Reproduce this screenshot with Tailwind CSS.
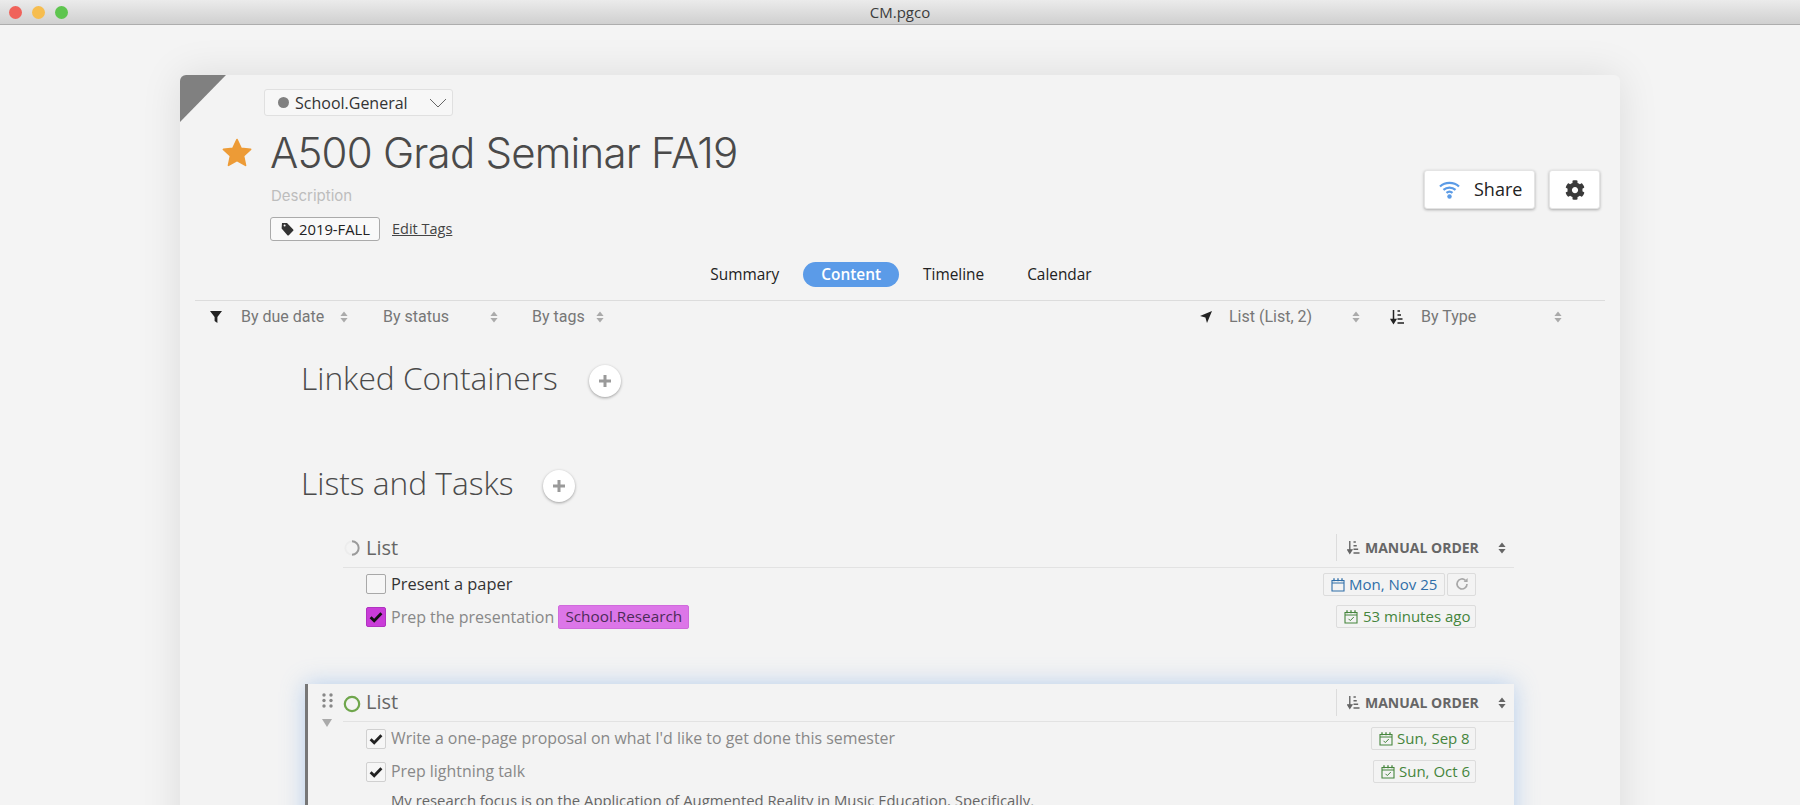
<!DOCTYPE html>
<html lang="en">
<head>
  <meta charset="UTF-8" />
  <title>CM.pgco</title>
  <script src="https://cdn.jsdelivr.net/npm/@tailwindcss/browser@4"></script>
</head>
<body class="bg-[#f4f4f4] h-[805px] overflow-hidden font-['Open_Sans',sans-serif] text-[#444]">
  <!-- shared icons -->
  <svg class="hidden">
    <symbol id="updown" viewBox="0 0 8 12"><path d="M4 0.5 7.6 5H0.4zM4 11.5 0.4 7H7.6z" fill="currentColor"/></symbol>
    <symbol id="sort" viewBox="0 0 14 16"><path d="M3 1v12M0.8 10.5 3 14l2.2-3.5z" stroke="currentColor" stroke-width="1.5" fill="currentColor"/><path d="M7 2h2.5M7 6h3.5M7 10h5M7 14h6.5" stroke="currentColor" stroke-width="1.6"/></symbol>
    <symbol id="cal" viewBox="0 0 14 15"><path d="M1 3.5h12v10.5H1zM1 6h12" fill="none" stroke="currentColor" stroke-width="1.1"/><path d="M3 1.2v3M7 1.2v3M11 1.2v3" stroke="currentColor" stroke-width="1.3"/></symbol>
    <symbol id="calcheck" viewBox="0 0 14 15"><path d="M1 3.5h12v10.5H1zM1 6h12" fill="none" stroke="currentColor" stroke-width="1.1"/><path d="M3 1.2v3M7 1.2v3M11 1.2v3" stroke="currentColor" stroke-width="1.3"/><path d="M4.5 9.8 6.3 11.6 9.8 8" fill="none" stroke="currentColor" stroke-width="1"/></symbol>
    <symbol id="check" viewBox="0 0 14 12"><path d="M1.6 6.2 5.2 9.8 12.4 2.2" fill="none" stroke="currentColor" stroke-width="2.8"/></symbol>
  </svg>

  <!-- Title bar -->
  <header class="relative h-[25px] flex items-center justify-center bg-gradient-to-b from-[#ebebeb] to-[#d0d0d0] border-b border-[#adadad] text-[15px] text-[#3c3c3c]">
    <div class="absolute left-[9px] top-[6px] flex gap-[10px]">
      <span class="w-[13px] h-[13px] rounded-full bg-[#f0625a]"></span>
      <span class="w-[13px] h-[13px] rounded-full bg-[#f6bd4f]"></span>
      <span class="w-[13px] h-[13px] rounded-full bg-[#5ec54f]"></span>
    </div>
    CM.pgco
  </header>

  <div class="px-[180px] pt-[50px]">
    <main class="relative bg-[#f3f3f3] rounded-md h-[800px] shadow-[0_0_40px_rgba(0,0,0,0.1)]">
      <!-- Corner flag -->
      <svg class="absolute left-0 top-0" width="46" height="47"><path d="M0 47V6a6 6 0 0 1 6-6H46z" fill="#808080"/></svg>

      <!-- Header -->
      <section class="flex justify-between h-[187px]">
        <div class="pl-[40px] pt-[14px]">
          <div class="ml-[44px] w-[189px] h-[27px] flex items-center bg-[#f7f7f7] border border-[#e0e0e0] rounded-[3px] pl-[13px] text-[16px] text-[#333]">
            <span class="w-[11px] h-[11px] rounded-full bg-[#808080] mr-[6px]"></span>
            <span>School.General</span>
            <svg class="ml-[21px]" width="18" height="10" viewBox="0 0 18 10"><path d="M1 1l8 8 8-8" fill="none" stroke="#666" stroke-width="1"/></svg>
          </div>
          <div class="flex items-center mt-[11px] h-[50px]">
            <svg class="mt-[2px]" width="34" height="34" viewBox="0 0 24 24"><path d="M12 2.5l2.9 6.2 6.7.8-5 4.6 1.4 6.6-6-3.4-6 3.4 1.4-6.6-5-4.6 6.7-.8z" fill="#ed9b36" stroke="#ed9b36" stroke-width="1.2" stroke-linejoin="round"/></svg>
            <h1 class="ml-[16px] font-['Inter',sans-serif] font-light text-[42px] tracking-[-0.8px] text-[#4a4a4a] whitespace-nowrap">A500 Grad Seminar FA19</h1>
          </div>
          <div class="ml-[51px] mt-[8px] font-['Inter',sans-serif] text-[15px] text-[#bdbdbd] leading-[22px]">Description</div>
          <div class="ml-[50px] mt-[10px] flex items-center">
            <span class="h-[24px] w-[110px] flex items-center bg-[#f9f9f9] border border-[#aaa] rounded-[3px] pl-[10px] text-[14.8px] text-[#222]">
              <svg class="mr-[5px]" width="13" height="14" viewBox="0 0 13 14"><path d="M1 1h5l6.2 6.4a1 1 0 0 1 0 1.4l-4.4 4.4a1 1 0 0 1-1.4 0L.6 6.6z" fill="#333"/><circle cx="3.6" cy="3.6" r="1" fill="#f9f9f9"/></svg>
              2019-FALL
            </span>
            <a class="ml-[12px] -mt-[1px] text-[14.5px] text-[#444] underline">Edit Tags</a>
          </div>
        </div>
        <div class="flex gap-[14px] pt-[95px] pr-[20px]">
          <button class="w-[111px] h-[39px] flex items-center bg-white rounded-[3px] border border-[#e4e4e4] shadow-[0_1px_3px_rgba(0,0,0,0.3)] pl-[13px] text-[18px] text-[#222]">
            <svg class="mr-[13px]" width="23" height="19" viewBox="0 0 24 22"><path d="M1 7.5C7 2 17 2 23 7.5M5 11.5c4-3.5 10-3.5 14 0M8.5 15c2-1.7 5-1.7 7 0" fill="none" stroke="#5b9be6" stroke-width="2.6"/><circle cx="12" cy="19" r="2.6" fill="#5b9be6"/></svg>
            Share
          </button>
          <button class="w-[51px] h-[39px] flex items-center justify-center bg-white rounded-[3px] border border-[#e4e4e4] shadow-[0_1px_3px_rgba(0,0,0,0.3)]">
            <svg width="20" height="20" viewBox="0 0 512 512"><path fill="#3a3a3a" d="M487.4 315.7l-42.6-24.6c4.3-23.2 4.3-47 0-70.2l42.6-24.6c4.9-2.8 7.1-8.6 5.5-14-11.1-35.6-30-67.8-54.7-94.6-3.8-4.1-10-5.1-14.8-2.3L380.8 110c-17.9-15.4-38.5-27.3-60.8-35.1V25.8c0-5.6-3.9-10.5-9.4-11.7-36.7-8.2-74.3-7.8-109.2 0-5.5 1.2-9.4 6.1-9.4 11.7V75c-22.2 7.9-42.8 19.8-60.8 35.1L88.7 85.5c-4.9-2.8-11-1.9-14.8 2.3-24.7 26.7-43.6 58.9-54.7 94.6-1.7 5.4.6 11.2 5.5 14L67.3 221c-4.3 23.2-4.3 47 0 70.2l-42.6 24.6c-4.9 2.8-7.1 8.6-5.5 14 11.1 35.6 30 67.8 54.7 94.6 3.8 4.1 10 5.1 14.8 2.3l42.6-24.6c17.9 15.4 38.5 27.3 60.8 35.1v49.2c0 5.6 3.9 10.5 9.4 11.7 36.7 8.2 74.3 7.8 109.2 0 5.5-1.2 9.4-6.1 9.4-11.7v-49.2c22.2-7.9 42.8-19.8 60.8-35.1l42.6 24.6c4.9 2.8 11 1.9 14.8-2.3 24.7-26.7 43.6-58.9 54.7-94.6 1.5-5.5-.7-11.3-5.6-14.1zM256 336c-44.1 0-80-35.9-80-80s35.9-80 80-80 80 35.9 80 80-35.9 80-80 80z"/></svg>
          </button>
        </div>
      </section>

      <!-- Tabs -->
      <nav class="flex justify-center gap-[5px] pl-[2px] text-[15.4px] font-medium text-[#222] h-[25px] items-center">
        <a class="px-[19px] leading-[25px]">Summary</a>
        <a class="px-[18px] leading-[25px] rounded-full bg-[#5b9be8] text-white font-semibold">Content</a>
        <a class="px-[19px] leading-[25px]">Timeline</a>
        <a class="px-[19px] leading-[25px]">Calendar</a>
      </nav>

      <!-- Filters -->
      <div class="mx-[15px] mt-[13px] border-t border-[#dcdcdc] h-[31px] pt-[2px] flex items-center justify-between pl-[15px] pr-[43px] font-['Roboto',sans-serif] text-[16px] text-[#777]">
        <div class="flex items-center">
          <svg class="mr-[19px] text-[#222]" width="12" height="12" viewBox="0 0 12 12"><path d="M0 0h12L7.4 6v6L4.6 10V6z" fill="currentColor"/></svg>
          <div class="w-[107px] flex items-center justify-between"><span>By due date</span><svg class="text-[#aaa]" width="8" height="12"><use href="#updown"/></svg></div>
          <div class="ml-[35px] w-[115px] flex items-center justify-between"><span>By status</span><svg class="text-[#aaa]" width="8" height="12"><use href="#updown"/></svg></div>
          <div class="ml-[34px] w-[72px] flex items-center justify-between"><span>By tags</span><svg class="text-[#aaa]" width="8" height="12"><use href="#updown"/></svg></div>
        </div>
        <div class="flex items-center">
          <svg class="mr-[17px] text-[#222]" width="12" height="12" viewBox="0 0 12 12"><path d="M12 0 7 12 5.4 6.6 0 5z" fill="currentColor"/></svg>
          <div class="w-[131px] flex items-center justify-between"><span>List (List, 2)</span><svg class="text-[#aaa]" width="8" height="12"><use href="#updown"/></svg></div>
          <svg class="ml-[30px] mr-[16px] text-[#222]" width="15" height="16"><use href="#sort"/></svg>
          <div class="w-[141px] flex items-center justify-between"><span>By Type</span><svg class="text-[#aaa]" width="8" height="12"><use href="#updown"/></svg></div>
        </div>
      </div>

      <!-- Linked Containers -->
      <div class="ml-[121px] mt-[27px] h-[40px] flex items-center text-[31.7px] font-light text-[#4a4a4a]">
        <h2>Linked Containers</h2>
        <button class="ml-[31px] mt-[6px] w-[32px] h-[32px] rounded-full bg-white shadow-[0_1px_3px_rgba(0,0,0,0.35)] flex items-center justify-center">
          <svg width="14" height="14"><path d="M7 1v12M1 7h12" stroke="#9a9a9a" stroke-width="3"/></svg>
        </button>
      </div>

      <!-- Lists and Tasks -->
      <div class="ml-[121px] mt-[65px] h-[40px] flex items-center text-[31.7px] font-light text-[#4a4a4a]">
        <h2>Lists and Tasks</h2>
        <button class="ml-[29px] mt-[6px] w-[32px] h-[32px] rounded-full bg-white shadow-[0_1px_3px_rgba(0,0,0,0.35)] flex items-center justify-center">
          <svg width="14" height="14"><path d="M7 1v12M1 7h12" stroke="#9a9a9a" stroke-width="3"/></svg>
        </button>
      </div>

      <!-- List 1 -->
      <div class="ml-[163px] w-[1171px] mt-[25px]">
        <div class="h-[40px] border-b border-[#e2e2e2] flex items-center text-[#666]">
          <svg class="ml-[1px]" width="16" height="18" viewBox="0 0 18 18"><circle cx="9" cy="9" r="7.5" fill="none" stroke="#ececec" stroke-width="2"/><path d="M9 1.5a7.5 7.5 0 0 1 0 15" fill="none" stroke="#9a9a9a" stroke-width="2.2"/></svg>
          <span class="ml-[6px] text-[20px] font-medium">List</span>
          <div class="ml-auto h-[27px] w-[178px] border-l border-[#dcdcdc] flex items-center pl-[10px]">
            <svg class="text-[#666]" width="13" height="15"><use href="#sort"/></svg>
            <span class="ml-[5px] text-[14px] font-bold">MANUAL ORDER</span>
            <svg class="ml-auto mr-[8px] text-[#666]" width="8" height="12"><use href="#updown"/></svg>
          </div>
        </div>
        <div class="h-[32px] flex items-center pl-[23px] pr-[38px]">
          <span class="w-[20px] h-[20px] bg-[#f6f6f6] border border-[#a8a8a8] rounded-[2px]"></span>
          <span class="ml-[5px] text-[16.4px] font-medium text-[#333]">Present a paper</span>
          <span class="ml-auto h-[23px] w-[122px] flex items-center border border-[#dcdcdc] rounded-[2px] pl-[7px] text-[15px] text-[#2f6ea8]">
            <svg class="mr-[4px]" width="14" height="15"><use href="#cal"/></svg>Mon, Nov 25
          </span>
          <span class="ml-[2px] h-[23px] w-[29px] flex items-center justify-center border border-[#dcdcdc] rounded-[2px]">
            <svg width="14" height="14" viewBox="0 0 14 14"><path d="M12 7a5 5 0 1 1-1.6-3.7" fill="none" stroke="#a8a8a8" stroke-width="1.7"/><path d="M12.6 1v4h-4z" fill="#a8a8a8"/></svg>
          </span>
        </div>
        <div class="h-[33px] flex items-center pl-[23px] pr-[38px]">
          <span class="w-[20px] h-[20px] bg-[#c93cd8] rounded-[2px] border border-[#b033c0] flex items-center justify-center text-[#111]"><svg width="14" height="12"><use href="#check"/></svg></span>
          <span class="ml-[5px] text-[16px] text-[#888]">Prep the presentation</span>
          <span class="ml-[4px] h-[24px] w-[131px] flex items-center justify-center bg-[#dc76e8] border border-[#d06adc] rounded-[2px] text-[15.3px] text-[#4d2c58]">School.Research</span>
          <span class="ml-auto h-[23px] w-[140px] flex items-center border border-[#dcdcdc] rounded-[2px] pl-[7px] text-[15px] text-[#45853c]">
            <svg class="mr-[5px]" width="14" height="15"><use href="#calcheck"/></svg>53 minutes ago
          </span>
        </div>
      </div>

      <!-- List 2 (hovered) -->
      <div class="relative ml-[125px] w-[1209px] mt-[51px] h-[200px] border-l-[3px] border-[#777] bg-[#f3f3f3] shadow-[0_0_22px_rgba(110,165,230,0.45)] pl-[35px]">
        <svg class="absolute left-[14px] top-[9px]" width="11" height="15" viewBox="0 0 11 15"><g fill="#888"><circle cx="2" cy="2" r="1.7"/><circle cx="9" cy="2" r="1.7"/><circle cx="2" cy="7.5" r="1.7"/><circle cx="9" cy="7.5" r="1.7"/><circle cx="2" cy="13" r="1.7"/><circle cx="9" cy="13" r="1.7"/></g></svg>
        <svg class="absolute left-[14px] top-[35px]" width="10" height="8" viewBox="0 0 10 8"><path d="M0 0h10L5 8z" fill="#aaa"/></svg>
        <div class="h-[38px] border-b border-[#e2e2e2] flex items-center text-[#666]">
          <svg class="mt-[2px]" width="18" height="18" viewBox="0 0 18 18"><circle cx="9" cy="9" r="7.2" fill="none" stroke="#6fa64c" stroke-width="2.2"/></svg>
          <span class="ml-[5px] mb-[2px] text-[20px] font-medium">List</span>
          <div class="ml-auto h-[27px] w-[178px] border-l border-[#dcdcdc] flex items-center pl-[10px]">
            <svg class="text-[#666]" width="13" height="15"><use href="#sort"/></svg>
            <span class="ml-[5px] text-[14px] font-bold">MANUAL ORDER</span>
            <svg class="ml-auto mr-[8px] text-[#666]" width="8" height="12"><use href="#updown"/></svg>
          </div>
        </div>
        <div class="h-[33px] flex items-center pl-[23px] pr-[38px]">
          <span class="w-[20px] h-[20px] bg-[#f6f6f6] border border-[#d0d0d0] rounded-[2px] flex items-center justify-center text-[#222]"><svg width="14" height="12"><use href="#check"/></svg></span>
          <span class="ml-[5px] text-[15.9px] text-[#888]">Write a one-page proposal on what I'd like to get done this semester</span>
          <span class="ml-auto h-[23px] w-[105px] flex items-center border border-[#dcdcdc] rounded-[2px] pl-[7px] text-[15px] text-[#45853c]">
            <svg class="mr-[4px]" width="14" height="15"><use href="#calcheck"/></svg>Sun, Sep 8
          </span>
        </div>
        <div class="h-[33px] flex items-center pl-[23px] pr-[38px]">
          <span class="w-[20px] h-[20px] bg-[#f6f6f6] border border-[#d0d0d0] rounded-[2px] flex items-center justify-center text-[#222]"><svg width="14" height="12"><use href="#check"/></svg></span>
          <span class="ml-[5px] text-[15.9px] text-[#888]">Prep lightning talk</span>
          <span class="ml-auto h-[23px] w-[103px] flex items-center border border-[#dcdcdc] rounded-[2px] pl-[7px] text-[15px] text-[#45853c]">
            <svg class="mr-[4px]" width="14" height="15"><use href="#calcheck"/></svg>Sun, Oct 6
          </span>
        </div>
        <p class="ml-[48px] mt-[1px] text-[14.85px] text-[#666] leading-[22px]">My research focus is on the Application of Augmented Reality in Music Education. Specifically,</p>
      </div>
    </main>
  </div>
</body>
</html>
